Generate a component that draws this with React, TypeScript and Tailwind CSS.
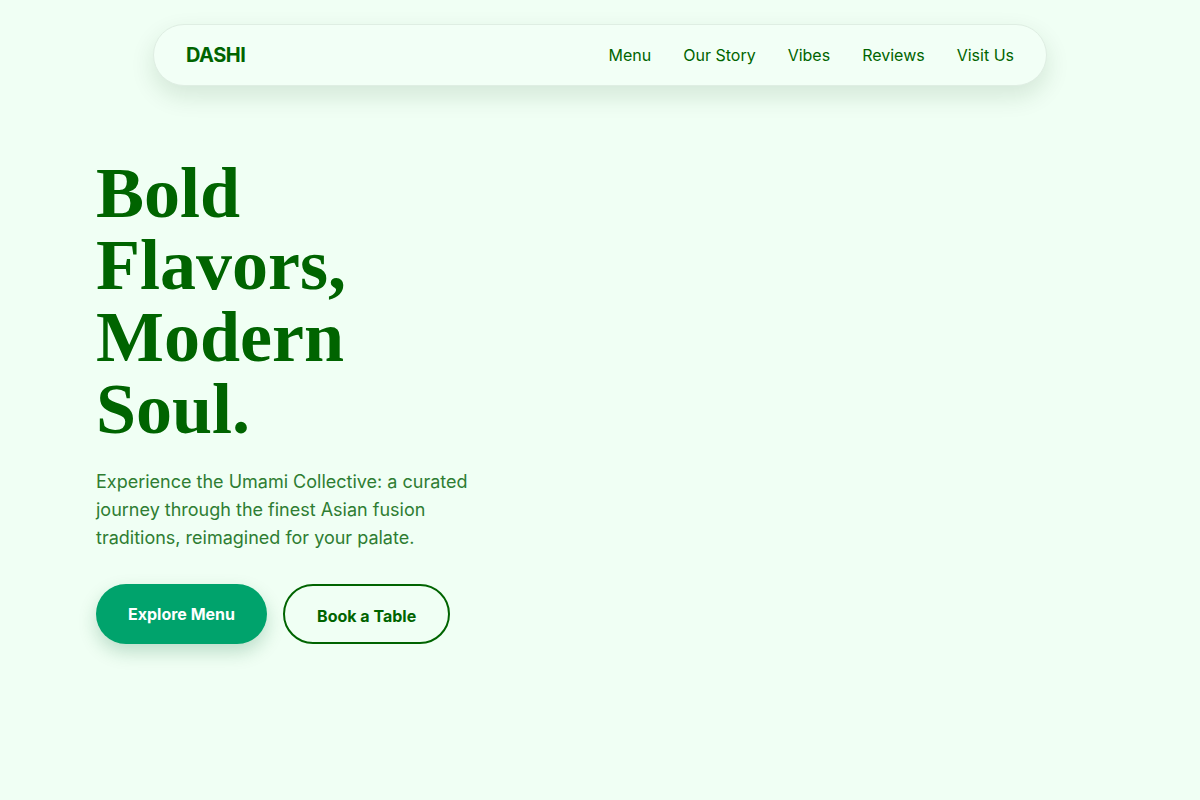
import React from "react";

const links = ["Menu", "Our Story", "Vibes", "Reviews", "Visit Us"];

export default function App() {
  return (
    <div
      className="min-h-[800px] w-full bg-[#f0fff4] text-[#006400]"
      style={{ fontFamily: "Inter, 'Noto Sans', sans-serif" }}
    >
      <header className="flex justify-center pt-6">
        <nav className="flex h-[62px] w-[894px] items-center justify-between rounded-full border border-[#dfeee3] bg-[#f2fff6] px-8 shadow-[0_10px_24px_rgba(0,60,20,0.12)]">
          <span className="text-[20px] font-bold tracking-tight text-[#006400]">DASHI</span>
          <ul className="flex items-center gap-8 text-base text-[#006400]">
            {links.map((l) => (
              <li key={l}>{l}</li>
            ))}
          </ul>
        </nav>
      </header>

      <main className="px-24 pt-[71px]">
        <h1
          className="text-[72px] font-bold leading-[72px] text-[#006400]"
          style={{ fontFamily: "'Liberation Serif', 'DejaVu Serif', serif" }}
        >
          <span className="block">Bold</span>
          <span className="block">Flavors,</span>
          <span className="block">Modern</span>
          <span className="block">Soul.</span>
        </h1>
        <p className="mt-[23px] max-w-[400px] text-lg leading-7 text-[#2e7d32]">
          Experience the Umami Collective: a curated journey through the finest Asian fusion
          traditions, reimagined for your palate.
        </p>
        <div className="mt-8 flex items-center gap-4">
          <button className="h-[60px] rounded-full bg-[#00a36c] px-8 text-base font-bold text-white shadow-[0_8px_18px_rgba(0,100,50,0.22)]">
            Explore Menu
          </button>
          <button className="h-[60px] rounded-full border-2 border-[#006400] px-8 pt-1 text-base font-bold text-[#006400]">
            Book a Table
          </button>
        </div>
      </main>
    </div>
  );
}
